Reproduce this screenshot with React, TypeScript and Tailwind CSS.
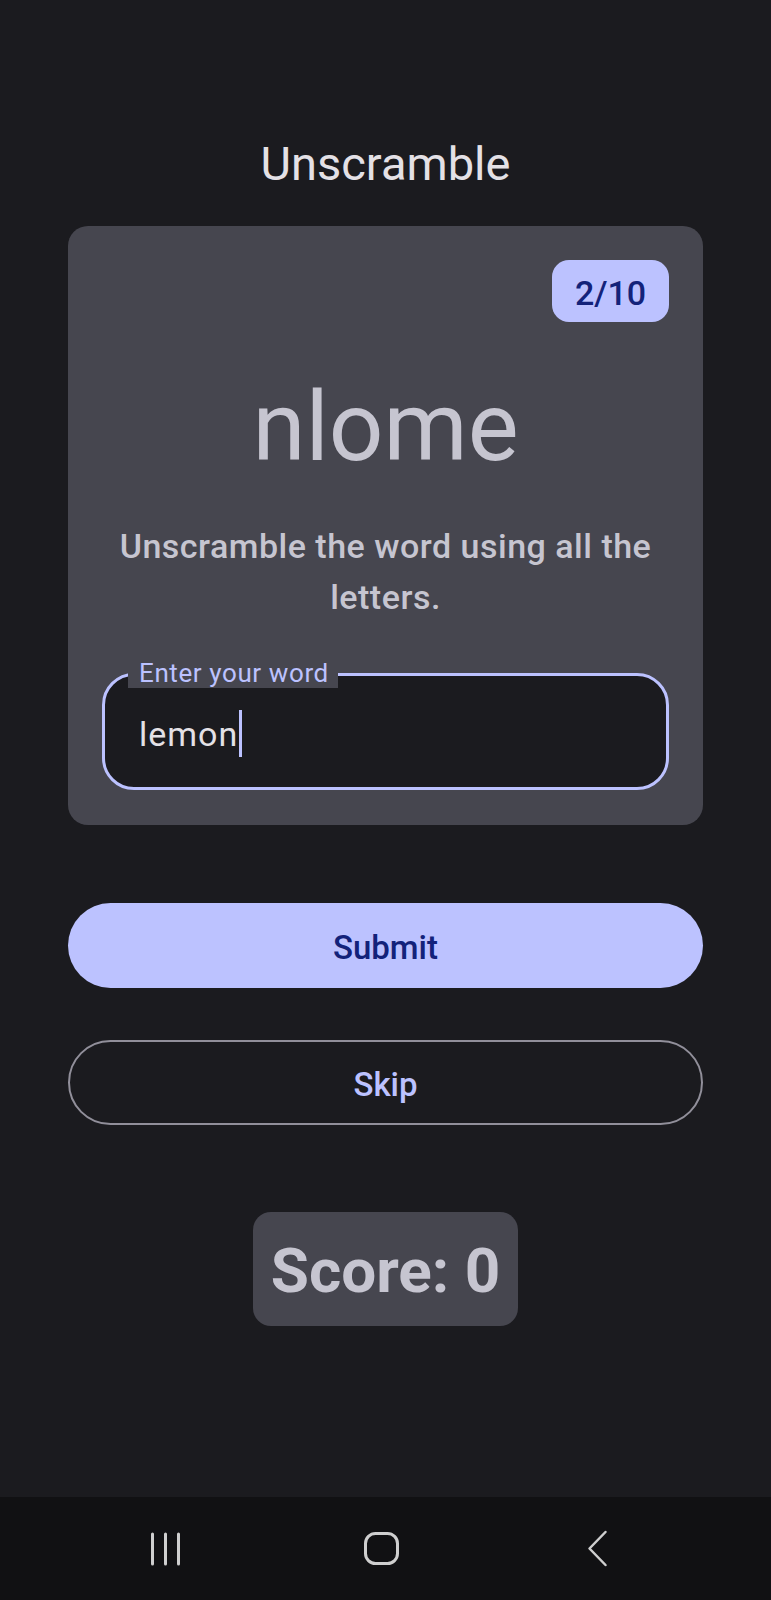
export default function App() {
  return (
    <div className="min-h-[1600px] flex flex-col bg-[#1b1b1f] font-[Roboto,'Liberation_Sans',sans-serif]">
      <main className="flex-1 flex flex-col items-center px-[68px]">
        {/* Title */}
        <h1 className="mt-[140px] text-[47px] leading-none text-[#e4e1e6]">Unscramble</h1>

        {/* Word card */}
        <section className="mt-[39px] w-full rounded-[20px] bg-[#46464f] px-[34px] pt-[34px] pb-[35px] flex flex-col">
          <div className="flex justify-end">
            <div className="w-[117px] h-[62px] rounded-[17px] bg-[#bcc2ff] flex items-center justify-center pt-[3px] text-[34px] leading-none font-medium text-[#13227a]">
              2/10
            </div>
          </div>

          <p className="mt-[57px] text-center text-[96px] leading-none text-[#c6c5d0]">nlome</p>

          <p className="mt-[46px] text-center text-[34px] leading-[51px] font-medium tracking-[0.5px] text-[#c6c5d0]">
            Unscramble the word using all the letters.
          </p>

          {/* Outlined text field */}
          <div className="relative mt-[50px] h-[117px] rounded-[32px] border-[3px] border-[#bcc2ff] bg-[#1b1b1f] flex items-center pl-[34px] pt-[4px]">
            <span className="absolute left-[23px] top-[-16px] bg-[#46464f] pl-[11px] pr-[9px] pb-[2px] text-[26px] leading-[26px] tracking-[0.6px] text-[#bcc2ff]">
              Enter your word
            </span>
            <span className="text-[34px] leading-none tracking-[1px] text-[#e4e1e6]">lemon</span>
            <span className="ml-[1px] w-[3px] h-[47px] bg-[#bcc2ff]" />
          </div>
        </section>

        {/* Actions */}
        <button className="mt-[78px] w-full h-[85px] rounded-full bg-[#bcc2ff] pt-[4px] text-[33px] font-medium text-[#13227a]">
          Submit
        </button>
        <button className="mt-[52px] w-full h-[85px] rounded-full border-2 border-[#918f9a] pt-[4px] text-[33px] font-medium text-[#bcc2ff]">
          Skip
        </button>

        {/* Score */}
        <div className="mt-[87px] w-[265px] h-[114px] rounded-[18px] bg-[#46464f] flex items-center justify-center pt-[4px] text-[62px] leading-none font-bold text-[#c6c5d0]">
          Score: 0
        </div>
      </main>

      {/* System navigation bar */}
      <nav className="h-[103px] bg-[#111113] flex items-center justify-center gap-[156px] pr-[8px] text-[#cfcfcf]">
        <div className="w-[60px] flex justify-center">
          <svg width="32" height="34" viewBox="0 0 32 34" fill="none" stroke="currentColor" strokeWidth="3" strokeLinecap="round">
            <line x1="2.5" y1="2" x2="2.5" y2="32" />
            <line x1="15.5" y1="2" x2="15.5" y2="32" />
            <line x1="28.5" y1="2" x2="28.5" y2="32" />
          </svg>
        </div>
        <div className="w-[60px] flex justify-center">
          <svg width="35" height="33" viewBox="0 0 35 33" fill="none" stroke="currentColor" strokeWidth="3">
            <rect x="1.5" y="1.5" width="32" height="30" rx="10" />
          </svg>
        </div>
        <div className="w-[60px] flex justify-center">
          <svg width="21" height="37" viewBox="0 0 21 37" fill="none" stroke="currentColor" strokeWidth="2.5" strokeLinecap="round" strokeLinejoin="round">
            <polyline points="18.5,2 2.5,18.5 18.5,35" />
          </svg>
        </div>
      </nav>
    </div>
  )
}
